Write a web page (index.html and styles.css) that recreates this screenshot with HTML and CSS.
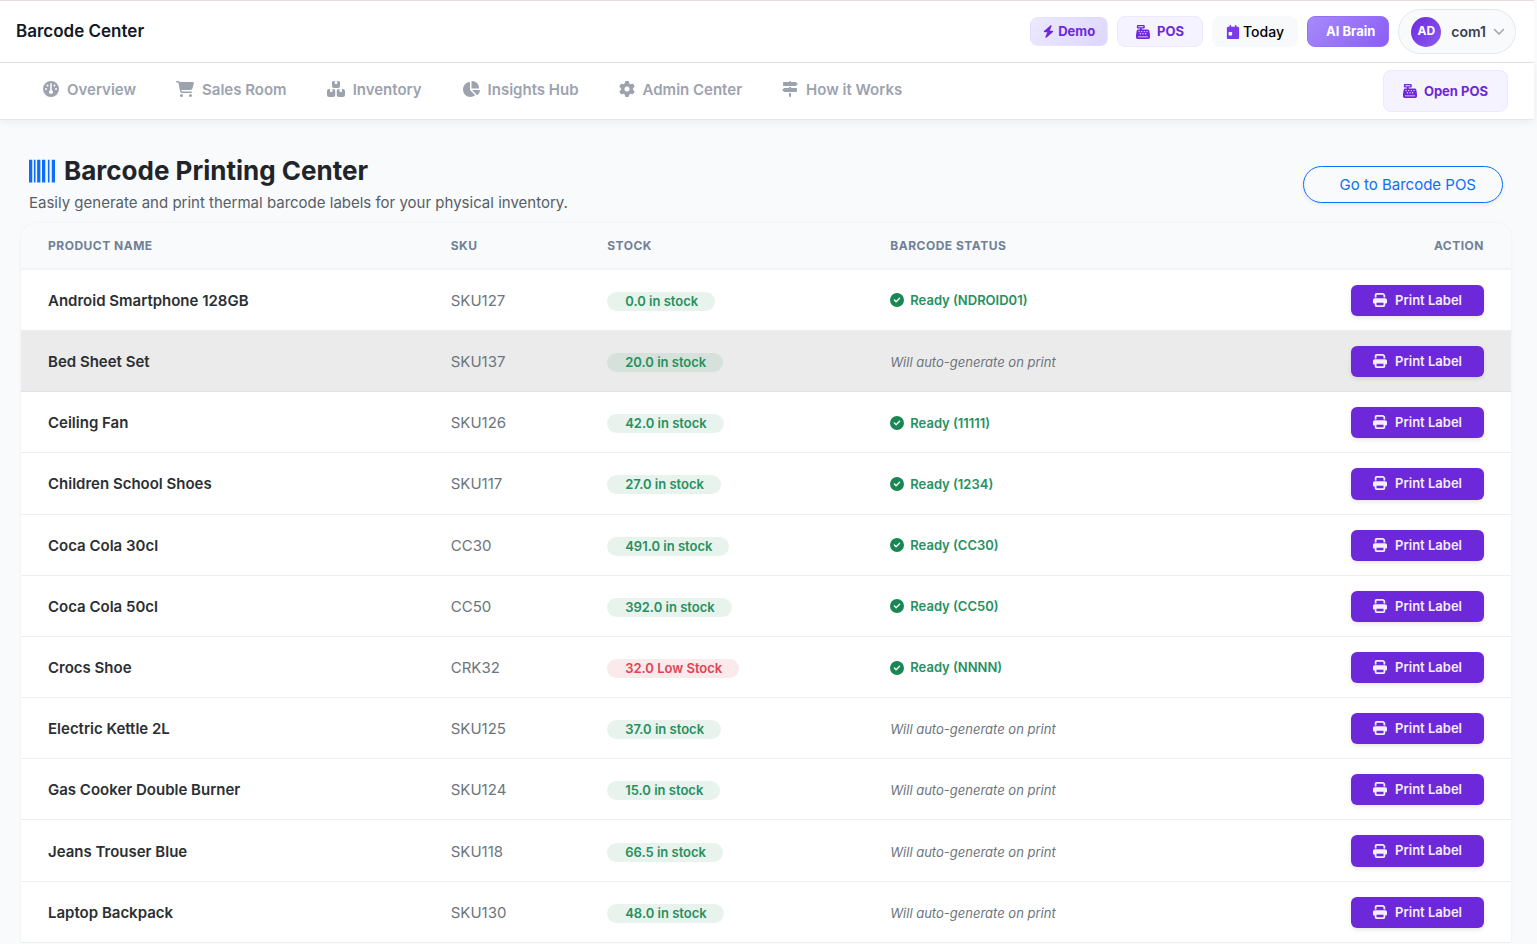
FILE: index.html
```html
<!DOCTYPE html>
<html lang="en">
<head>
<meta charset="utf-8">
<title>Barcode Center</title>
<link rel="stylesheet" href="styles.css">
</head>
<body>
<svg class="sprite" aria-hidden="true">
<symbol id="gauge" viewBox="0 0 512 512"><path d="M0 256a256 256 0 1 1 512 0A256 256 0 1 1 0 256zm320 96c0-26.9-16.5-49.9-40-59.3V88c0-13.3-10.7-24-24-24s-24 10.7-24 24V292.7c-23.5 9.5-40 32.5-40 59.3c0 35.3 28.7 64 64 64s64-28.7 64-64zM144 176a32 32 0 1 0 0-64 32 32 0 1 0 0 64zm-16 80a32 32 0 1 0 -64 0 32 32 0 1 0 64 0zm288 32a32 32 0 1 0 0-64 32 32 0 1 0 0 64zM400 144a32 32 0 1 0 -64 0 32 32 0 1 0 64 0z"/></symbol>
<symbol id="cart" viewBox="0 0 576 512"><path d="M0 24C0 10.7 10.7 0 24 0H69.5c22 0 41.5 12.8 50.6 32h411c26.3 0 45.5 25 38.6 50.4l-41 152.3c-8.5 31.4-37 53.3-69.5 53.3H170.7l5.4 28.5c2.2 11.3 12.1 19.5 23.6 19.5H488c13.3 0 24 10.7 24 24s-10.7 24-24 24H199.7c-34.6 0-64.3-24.6-70.7-58.5L77.4 54.5c-.7-3.8-4-6.5-7.9-6.5H24C10.7 48 0 37.3 0 24zM128 464a48 48 0 1 1 96 0 48 48 0 1 1 -96 0zm336-48a48 48 0 1 1 0 96 48 48 0 1 1 0-96z"/></symbol>
<symbol id="boxes" viewBox="0 0 576 512"><path d="M248 0H208c-26.5 0-48 21.5-48 48V160c0 35.3 28.7 64 64 64H352c35.3 0 64-28.7 64-64V48c0-26.5-21.5-48-48-48H328V80c0 8.8-7.2 16-16 16H264c-8.8 0-16-7.2-16-16V0zM64 256c-35.3 0-64 28.7-64 64V448c0 35.3 28.7 64 64 64H200c35.3 0 64-28.7 64-64V320c0-35.3-28.7-64-64-64H176v80c0 8.8-7.2 16-16 16H112c-8.8 0-16-7.2-16-16V256H64zM376 512H512c35.3 0 64-28.7 64-64V320c0-35.3-28.7-64-64-64H480v80c0 8.8-7.2 16-16 16H416c-8.8 0-16-7.2-16-16V256H376c-35.3 0-64 28.7-64 64V448c0 35.3 28.7 64 64 64z"/></symbol>
<symbol id="pie" viewBox="0 0 576 512"><path d="M304 240V16.6c0-9 7-16.6 16-16.6C443.7 0 544 100.3 544 224c0 9-7.6 16-16.6 16H304zM32 272C32 150.7 122.1 50.3 239 34.3c9.2-1.3 17 6.1 17 15.4V288L412.5 444.5c6.7 6.7 6.2 17.7-1.5 23.1C371.8 495.6 323.8 512 272 512C139.5 512 32 404.6 32 272zm526.4 16c9.3 0 16.6 7.8 15.4 17c-7.7 55.9-34.6 105.6-73.9 142.3c-6 5.6-15.4 5.2-21.2-.7L320 288H558.4z"/></symbol>
<symbol id="gear" viewBox="0 0 512 512"><path d="M495.9 166.6c3.2 8.7 .5 18.4-6.4 24.6l-43.3 39.4c1.1 8.3 1.7 16.8 1.7 25.4s-.6 17.1-1.7 25.4l43.3 39.4c6.9 6.2 9.6 15.9 6.4 24.6c-4.4 11.9-9.7 23.3-15.8 34.3l-4.7 8.1c-6.6 11-14 21.4-22.1 31.2c-5.9 7.2-15.7 9.6-24.5 6.8l-55.7-17.7c-13.4 10.3-28.2 18.9-44 25.4l-12.5 57.1c-2 9.1-9 16.3-18.2 17.8c-13.8 2.3-28 3.5-42.5 3.5s-28.7-1.2-42.5-3.5c-9.2-1.5-16.2-8.7-18.2-17.8l-12.5-57.1c-15.8-6.5-30.6-15.1-44-25.4L83.1 425.9c-8.8 2.8-18.6 .3-24.5-6.8c-8.1-9.8-15.5-20.2-22.1-31.2l-4.7-8.1c-6.1-11-11.4-22.4-15.8-34.3c-3.2-8.7-.5-18.4 6.4-24.6l43.3-39.4C64.6 273.1 64 264.6 64 256s.6-17.1 1.7-25.4L22.4 191.2c-6.9-6.2-9.6-15.9-6.4-24.6c4.4-11.9 9.7-23.3 15.8-34.3l4.7-8.1c6.6-11 14-21.4 22.1-31.2c5.9-7.2 15.7-9.6 24.5-6.8l55.7 17.7c13.4-10.3 28.2-18.9 44-25.4l12.5-57.1c2-9.1 9-16.3 18.2-17.8C227.3 1.2 241.5 0 256 0s28.7 1.2 42.5 3.5c9.2 1.5 16.2 8.7 18.2 17.8l12.5 57.1c15.8 6.5 30.6 15.1 44 25.4l55.7-17.7c8.8-2.8 18.6-.3 24.5 6.8c8.1 9.8 15.5 20.2 22.1 31.2l4.7 8.1c6.1 11 11.4 22.4 15.8 34.3zM256 336a80 80 0 1 0 0-160 80 80 0 1 0 0 160z"/></symbol>
<symbol id="signs" viewBox="0 0 512 512"><path d="M224 32H64C46.3 32 32 46.3 32 64v64c0 17.7 14.3 32 32 32H441.4c4.2 0 8.3-1.7 11.3-4.7l48-48c6.2-6.2 6.2-16.4 0-22.6l-48-48c-3-3-7.1-4.7-11.3-4.7H288c0-17.7-14.3-32-32-32s-32 14.3-32 32zM480 256c0-17.7-14.3-32-32-32H288V192H224v32H70.6c-4.2 0-8.3 1.7-11.3 4.7l-48 48c-6.2 6.2-6.2 16.4 0 22.6l48 48c3 3 7.1 4.7 11.3 4.7H448c17.7 0 32-14.3 32-32V256zM288 480V384H224v96c0 17.7 14.3 32 32 32s32-14.3 32-32z"/></symbol>
<symbol id="register" viewBox="0 0 512 512"><path d="M64 0C46.3 0 32 14.3 32 32V96c0 17.7 14.3 32 32 32h80v32H87c-31.6 0-58.5 23.1-63.3 54.4L1.1 364.1C.4 368.8 0 373.6 0 378.4V448c0 35.3 28.7 64 64 64H448c35.3 0 64-28.7 64-64V378.4c0-4.8-.4-9.6-1.1-14.4L488.2 214.4C483.5 183.1 456.6 160 425 160H208V128h80c17.7 0 32-14.3 32-32V32c0-17.7-14.3-32-32-32H64zM96 48H256c8.8 0 16 7.2 16 16s-7.2 16-16 16H96c-8.8 0-16-7.2-16-16s7.2-16 16-16zM64 432c0-8.8 7.2-16 16-16H432c8.8 0 16 7.2 16 16s-7.2 16-16 16H80c-8.8 0-16-7.2-16-16zm48-168a24 24 0 1 1 0-48 24 24 0 1 1 0 48zm120-24a24 24 0 1 1 -48 0 24 24 0 1 1 48 0zM160 344a24 24 0 1 1 0-48 24 24 0 1 1 0 48zM328 240a24 24 0 1 1 -48 0 24 24 0 1 1 48 0zM256 344a24 24 0 1 1 0-48 24 24 0 1 1 0 48zM424 240a24 24 0 1 1 -48 0 24 24 0 1 1 48 0zM352 344a24 24 0 1 1 0-48 24 24 0 1 1 0 48z"/></symbol>
<symbol id="bolt" viewBox="0 0 448 512"><path d="M349.4 44.6c5.9-13.7 1.5-29.7-10.6-38.5s-28.6-8-39.9 1.8l-256 224c-10 8.8-13.6 22.9-8.9 35.3S50.7 288 64 288H175.5L98.6 467.4c-5.9 13.7-1.5 29.7 10.6 38.5s28.6 8 39.9-1.8l256-224c10-8.8 13.6-22.9 8.9-35.3s-16.6-20.7-30-20.7H272.5L349.4 44.6z"/></symbol>
<symbol id="calendar" viewBox="0 0 448 512"><path d="M128 0c17.7 0 32 14.3 32 32V64H288V32c0-17.7 14.3-32 32-32s32 14.3 32 32V64h48c26.5 0 48 21.5 48 48v48H0V112C0 85.5 21.5 64 48 64H96V32c0-17.7 14.3-32 32-32zM0 160H448V464c0 26.5-21.5 48-48 48H48c-26.5 0-48-21.5-48-48V160zm80 96c-8.8 0-16 7.2-16 16v96c0 8.8 7.2 16 16 16h96c8.8 0 16-7.2 16-16V272c0-8.8-7.2-16-16-16H80z"/></symbol>
<symbol id="print" viewBox="0 0 512 512"><path d="M128 0C92.7 0 64 28.7 64 64v96h64V64H354.7L384 93.3V160h64V93.3c0-17-6.700-33.300-18.700-45.300L400 18.700C388 6.700 371.700 0 354.700 0H128zM384 352v32 64H128V384 368 352H384zm64 32h32c17.700 0 32-14.300 32-32V256c0-35.300-28.700-64-64-64H64c-35.300 0-64 28.700-64 64v96c0 17.700 14.300 32 32 32H64v64c0 35.300 28.700 64 64 64H384c35.300 0 64-28.700 64-64V384z"/></symbol>
<symbol id="check" viewBox="0 0 512 512"><path d="M256 512A256 256 0 1 0 256 0a256 256 0 1 0 0 512zM369 209L241 337c-9.4 9.4-24.6 9.4-33.9 0l-64-64c-9.4-9.4-9.4-24.6 0-33.9s24.6-9.4 33.9 0l47 47L335 175c9.4-9.4 24.6-9.4 33.9 0s9.4 24.6 0 33.9z"/></symbol>
<symbol id="barcode" viewBox="0 0 512 512"><path d="M0 32h64v448H0zM96 32h32v448H96zM160 32h64v448h-64zM256 32h64v448h-64zM372 32h32v448h-32zM448 32h64v448h-64z"/></symbol>
<symbol id="chevron" viewBox="0 0 12 8"><path d="M1.5 1.5 6 6l4.5-4.5" fill="none" stroke="currentColor" stroke-width="1.5" stroke-linecap="round" stroke-linejoin="round"/></symbol>
</svg>

<header class="topbar">
  <div class="topbar-title">Barcode Center</div>
  <div class="topbar-actions">
    <button class="chip chip-demo" type="button"><svg class="icon"><use href="#bolt"/></svg>Demo</button>
    <a class="chip chip-pos" href="#pos"><svg class="icon"><use href="#register"/></svg>POS</a>
    <button class="chip chip-today" type="button"><svg class="icon"><use href="#calendar"/></svg>Today</button>
    <button class="chip chip-ai" type="button">AI Brain</button>
    <button class="profile" type="button"><span class="avatar">AD</span>com1<svg class="chevron"><use href="#chevron"/></svg></button>
  </div>
</header>

<nav class="mainnav" aria-label="Main">
  <div class="mainnav-links">
    <a href="#overview"><svg class="icon"><use href="#gauge"/></svg>Overview</a>
    <a href="#sales"><svg class="icon icon-wide"><use href="#cart"/></svg>Sales Room</a>
    <a href="#inventory"><svg class="icon icon-wide"><use href="#boxes"/></svg>Inventory</a>
    <a href="#insights"><svg class="icon icon-wide"><use href="#pie"/></svg>Insights Hub</a>
    <a href="#admin"><svg class="icon"><use href="#gear"/></svg>Admin Center</a>
    <a href="#how"><svg class="icon"><use href="#signs"/></svg>How it Works</a>
  </div>
  <a class="open-pos" href="#pos"><svg class="icon"><use href="#register"/></svg>Open POS</a>
</nav>

<main class="page">
  <div class="page-head">
    <div>
      <h1><svg class="icon"><use href="#barcode"/></svg>Barcode Printing Center</h1>
      <p>Easily generate and print thermal barcode labels for your physical inventory.</p>
    </div>
    <a class="goto-pos" href="#barcode-pos">Go to Barcode POS</a>
  </div>

  <div class="card">
    <table class="products">
      <colgroup><col class="col-name"><col class="col-sku"><col class="col-stock"><col><col class="col-action"></colgroup>
      <thead>
        <tr><th scope="col">Product Name</th><th scope="col">SKU</th><th scope="col">Stock</th><th scope="col">Barcode Status</th><th scope="col">Action</th></tr>
      </thead>
      <tbody>
        <tr><td class="name">Android Smartphone 128GB</td><td class="sku">SKU127</td><td><span class="badge">0.0 in stock</span></td><td><span class="ready"><svg class="icon"><use href="#check"/></svg>Ready (NDROID01)</span></td><td><button class="print" type="button"><svg class="icon"><use href="#print"/></svg>Print Label</button></td></tr>
        <tr class="active"><td class="name">Bed Sheet Set</td><td class="sku">SKU137</td><td><span class="badge">20.0 in stock</span></td><td><em class="pending">Will auto-generate on print</em></td><td><button class="print" type="button"><svg class="icon"><use href="#print"/></svg>Print Label</button></td></tr>
        <tr><td class="name">Ceiling Fan</td><td class="sku">SKU126</td><td><span class="badge">42.0 in stock</span></td><td><span class="ready"><svg class="icon"><use href="#check"/></svg>Ready (11111)</span></td><td><button class="print" type="button"><svg class="icon"><use href="#print"/></svg>Print Label</button></td></tr>
        <tr><td class="name">Children School Shoes</td><td class="sku">SKU117</td><td><span class="badge">27.0 in stock</span></td><td><span class="ready"><svg class="icon"><use href="#check"/></svg>Ready (1234)</span></td><td><button class="print" type="button"><svg class="icon"><use href="#print"/></svg>Print Label</button></td></tr>
        <tr><td class="name">Coca Cola 30cl</td><td class="sku">CC30</td><td><span class="badge">491.0 in stock</span></td><td><span class="ready"><svg class="icon"><use href="#check"/></svg>Ready (CC30)</span></td><td><button class="print" type="button"><svg class="icon"><use href="#print"/></svg>Print Label</button></td></tr>
        <tr><td class="name">Coca Cola 50cl</td><td class="sku">CC50</td><td><span class="badge">392.0 in stock</span></td><td><span class="ready"><svg class="icon"><use href="#check"/></svg>Ready (CC50)</span></td><td><button class="print" type="button"><svg class="icon"><use href="#print"/></svg>Print Label</button></td></tr>
        <tr><td class="name">Crocs Shoe</td><td class="sku">CRK32</td><td><span class="badge badge-low">32.0 Low Stock</span></td><td><span class="ready"><svg class="icon"><use href="#check"/></svg>Ready (NNNN)</span></td><td><button class="print" type="button"><svg class="icon"><use href="#print"/></svg>Print Label</button></td></tr>
        <tr><td class="name">Electric Kettle 2L</td><td class="sku">SKU125</td><td><span class="badge">37.0 in stock</span></td><td><em class="pending">Will auto-generate on print</em></td><td><button class="print" type="button"><svg class="icon"><use href="#print"/></svg>Print Label</button></td></tr>
        <tr><td class="name">Gas Cooker Double Burner</td><td class="sku">SKU124</td><td><span class="badge">15.0 in stock</span></td><td><em class="pending">Will auto-generate on print</em></td><td><button class="print" type="button"><svg class="icon"><use href="#print"/></svg>Print Label</button></td></tr>
        <tr><td class="name">Jeans Trouser Blue</td><td class="sku">SKU118</td><td><span class="badge">66.5 in stock</span></td><td><em class="pending">Will auto-generate on print</em></td><td><button class="print" type="button"><svg class="icon"><use href="#print"/></svg>Print Label</button></td></tr>
        <tr><td class="name">Laptop Backpack</td><td class="sku">SKU130</td><td><span class="badge">48.0 in stock</span></td><td><em class="pending">Will auto-generate on print</em></td><td><button class="print" type="button"><svg class="icon"><use href="#print"/></svg>Print Label</button></td></tr>
      </tbody>
    </table>
  </div>
</main>
</body>
</html>
```
FILE: styles.css
```css
* { box-sizing: border-box; }

body {
  margin: 0;
  padding-right: 3px;
  background: #f8fafc;
  color: #212529;
  font-family: Inter, "Liberation Sans", sans-serif;
  font-size: 15px;
  line-height: 1.4;
}

a { color: inherit; text-decoration: none; }
button { font: inherit; border: 0; cursor: pointer; }

.sprite { position: absolute; width: 0; height: 0; }
.icon { width: 16px; height: 16px; fill: currentColor; flex: none; }

/* Top bar */
.topbar {
  display: flex;
  align-items: center;
  justify-content: space-between;
  padding: 8px 18px 8px 16px;
  background: #fff;
  border-top: 1px solid #eadedc;
  border-bottom: 1px solid #e2e5e9;
}
.topbar-title { font-size: 17px; font-weight: 600; color: #111827; }
.topbar-actions { display: flex; align-items: center; gap: 9px; }

.chip {
  display: inline-flex;
  align-items: center;
  justify-content: center;
  height: 31px;
  border: 1px solid transparent;
  border-radius: 8px;
  font-size: 13px;
  font-weight: 600;
}
.chip .icon { width: 14px; height: 14px; }
.chip-demo {
  height: 29px;
  padding: 0 12px;
  gap: 4px;
  font-weight: 700;
  color: #6d28d9;
  background: linear-gradient(135deg, #ede9fe, #ddd6fe);
}
.chip-demo .icon { width: 11px; height: 13px; }
.chip-pos { padding: 0 18px; gap: 7px; font-weight: 700; color: #6d28d9; background: #f5f3ff; border-color: #ede9fe; }
.chip-today { padding: 0 13px; gap: 3px; font-size: 14px; font-weight: 500; color: #000; background: #f8f9fb; }
.chip-today .icon { color: #7c3aed; }
.chip-ai { padding: 0 13px 0 18px; font-weight: 700; color: #fff; background: linear-gradient(135deg, #a78bfa, #8b5cf6); border: 1px solid #9571f6; }

.profile {
  display: flex;
  align-items: center;
  height: 45px;
  padding: 0 10px 0 12px;
  border: 1px solid #e5e7eb;
  border-radius: 23px;
  background: #f9fafb;
  color: #374151;
  font-size: 14px;
  font-weight: 600;
}
.avatar {
  display: grid;
  place-items: center;
  width: 30px;
  height: 30px;
  margin-right: 10px;
  border-radius: 50%;
  background: linear-gradient(135deg, #6d28d9, #8b5cf6);
  color: #fff;
  font-size: 12px;
  font-weight: 700;
}
.chevron { width: 12px; height: 8px; margin-left: 7px; color: #9ca3af; }

/* Main navigation */
.mainnav {
  display: flex;
  align-items: center;
  justify-content: space-between;
  padding: 7px 26px 7px 43px;
  background: #fff;
  border-bottom: 1px solid #e5e7eb;
  box-shadow: 0 2px 8px rgba(0, 0, 0, 0.06);
}
.mainnav-links { display: flex; gap: 40px; padding-bottom: 4px; color: #9ca3af; font-weight: 600; }
.mainnav-links a { display: flex; align-items: center; gap: 8px; }
.mainnav-links .icon-wide { width: 18px; }
.open-pos {
  display: flex;
  align-items: center;
  gap: 7px;
  height: 42px;
  padding: 0 19px;
  border: 1px solid #ede9fe;
  border-radius: 8px;
  background: #f5f3ff;
  color: #6d28d9;
  font-size: 13px;
  font-weight: 700;
}
.open-pos .icon { width: 14px; height: 14px; }

/* Page */
.page { padding: 30px 23px 0 21px; }
.page-head {
  display: flex;
  align-items: center;
  justify-content: space-between;
  padding: 0 8px 9px;
}
h1 {
  display: flex;
  align-items: center;
  gap: 9px;
  margin: 0;
  font-size: 26px;
  font-weight: 700;
  line-height: 42px;
}
h1 .icon { width: 26px; height: 26px; color: #0d6efd; }
.page-head p { margin: 0; color: #565e66; line-height: 22px; }
.goto-pos {
  margin-top: 4px;
  padding: 7px 26px 7px 36px;
  border: 1px solid #0d6efd;
  border-radius: 19px;
  color: #0d6efd;
  box-shadow: 0 2px 4px rgba(0, 0, 0, 0.07);
}

/* Product table */
.card {
  overflow: hidden;
  border-radius: 16px 16px 0 0;
  background: #fff;
  box-shadow: 0 0 3px rgba(0, 0, 0, 0.06);
}
.products { width: 100%; border-collapse: separate; border-spacing: 0; table-layout: fixed; }
.col-name { width: 27.5%; }
.col-sku { width: 10.5%; }
.col-stock { width: 19%; }
.col-action { width: 14%; }

th {
  padding: 15px 20px 13px;
  background: #f8fafc;
  border-bottom: 2px solid #eff4f9;
  color: #718096;
  font-size: 12px;
  font-weight: 700;
  letter-spacing: 0.5px;
  text-align: left;
  text-transform: uppercase;
}
td { padding: 15px 20px 14px; border-bottom: 1px solid #eceef0; vertical-align: middle; }
th:first-child, td:first-child { padding-left: 27px; }
th:last-child, td:last-child { padding-right: 27px; text-align: right; }
.active td { background: #ebebeb; border-bottom-color: #e1e2e8; }

.name { font-weight: 600; color: #2b2f33; }
.sku { color: #6c757d; }
.badge {
  display: inline-block;
  padding: 0 17px 0 18px;
  border-radius: 10px;
  background: rgba(25, 135, 84, 0.1);
  color: #27905f;
  font-size: 13px;
  font-weight: 600;
  line-height: 19px;
}
.badge-low { background: rgba(220, 53, 69, 0.1); color: #e04352; }
.ready { display: flex; align-items: center; gap: 6px; color: #27905f; font-size: 13px; font-weight: 600; }
.ready .icon { width: 14px; height: 14px; color: #198754; }
.pending { color: #6c757d; font-size: 13px; }
.print {
  display: inline-flex;
  align-items: center;
  gap: 8px;
  padding: 6px 22px 7px;
  border-radius: 6px;
  background: #6d28d9;
  color: #f3edfc;
  font-size: 13px;
  font-weight: 600;
  vertical-align: middle;
  box-shadow: 0 2px 4px rgba(0, 0, 0, 0.1);
}
.print .icon { width: 14px; height: 14px; }
```
